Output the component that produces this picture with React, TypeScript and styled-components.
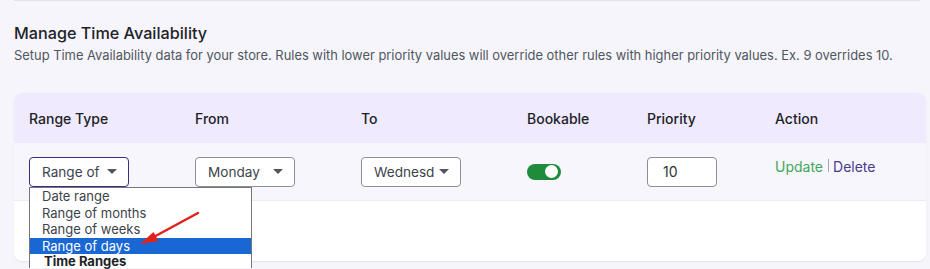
import React from "react";
import styled, { createGlobalStyle } from "styled-components";

const GlobalStyle = createGlobalStyle`
  html, body { margin: 0; padding: 0; height: 100%; }
  body {
    background: #f6f5fb;
    font-family: Inter, "Noto Sans", sans-serif;
    color: #1d2327;
    overflow: hidden;
  }
  #root { height: 100%; }
`;

const Page = styled.div`
  box-sizing: border-box;
  min-height: 100%;
  padding: 0 4px 0 14px;
`;

const TopRule = styled.div`
  height: 1px;
  background: #e2e1e8;
  margin-right: 6px;
`;

const Title = styled.h2`
  margin: 20px 0 0;
  font-size: 16.2px;
  line-height: 24px;
  font-weight: 500;
  color: #1d2327;
`;

const Subtitle = styled.p`
  margin: 1px 0 0;
  font-size: 12.9px;
  line-height: 20px;
  color: #50575e;
`;

const Card = styled.div`
  position: relative;
  margin-top: 27px;
  border-radius: 8px;
  background: #ffffff;
  box-shadow: 0 1px 0 #e6e5ec, 0 1px 3px rgba(0, 0, 0, 0.04);
  height: 168px;
`;

const Grid = styled.div<{ $bg: string; $h: number }>`
  display: grid;
  grid-template-columns: 166px 166px 166px 120px 128px 1fr;
  align-items: center;
  padding-left: 15px;
  height: ${(p) => p.$h}px;
  background: ${(p) => p.$bg};
`;

const HeaderRow = styled(Grid)`
  border-radius: 8px 8px 0 0;
`;

const BodyRow = styled(Grid)`
  border-bottom: 1px solid #ecebf1;
  box-sizing: border-box;
`;

const HeadCell = styled.div`
  font-size: 14px;
  font-weight: 500;
  color: #1d2327;
`;

const SelectBox = styled.div<{ $w: number; $focus?: boolean }>`
  box-sizing: border-box;
  width: ${(p) => p.$w}px;
  height: 30px;
  border: 1px solid ${(p) => (p.$focus ? "#3b2a86" : "#8c8f94")};
  border-radius: 4px;
  background: #ffffff;
  display: flex;
  align-items: center;
  justify-content: space-between;
  padding: 0 11px 0 12px;
  font-size: 13.6px;
  color: #3c434a;
`;

const Caret = styled.span`
  flex: none;
  margin-left: 4px;
  width: 0;
  height: 0;
  border-left: 5px solid transparent;
  border-right: 5px solid transparent;
  border-top: 5px solid #50575e;
`;

const Toggle = styled.div<{ $on: boolean }>`
  position: relative;
  width: 34px;
  height: 16px;
  border-radius: 8px;
  background: ${(p) => (p.$on ? "#1e8c3a" : "#bbb")};
`;

const Knob = styled.span`
  position: absolute;
  top: 1.5px;
  right: 3px;
  width: 13px;
  height: 13px;
  border-radius: 50%;
  background: #ffffff;
`;

const NumberInput = styled.div`
  box-sizing: border-box;
  width: 70px;
  height: 30px;
  border: 1px solid #8c8f94;
  border-radius: 4px;
  background: #ffffff;
  display: flex;
  align-items: center;
  padding-left: 15px;
  font-size: 14px;
  color: #2c3338;
`;

const Actions = styled.div`
  align-self: start;
  margin-top: 15px;
  display: flex;
  align-items: flex-start;
  font-size: 14px;
  line-height: 17px;
`;

const ActionLink = styled.span<{ $color: string }>`
  color: ${(p) => p.$color};
  cursor: pointer;
`;

const Sep = styled.span`
  width: 1px;
  height: 13px;
  margin: 1px 4px 0 5px;
  background: #a7aaad;
`;

const Listbox = styled.div`
  position: absolute;
  left: 15px;
  top: 94px;
  width: 223px;
  box-sizing: border-box;
  border: 1px solid #767676;
  border-bottom: none;
  background: #ffffff;
  z-index: 2;
`;

const Option = styled.div<{ $active?: boolean }>`
  height: 16.5px;
  line-height: 16.5px;
  padding-left: 12px;
  font-size: 13px;
  background: ${(p) => (p.$active ? "#1967d2" : "transparent")};
  color: ${(p) => (p.$active ? "#ffffff" : "#3c434a")};
`;

const GroupLabel = styled.div`
  height: 14px;
  line-height: 14px;
  padding-left: 14px;
  font-size: 13px;
  font-weight: 700;
  color: #1d2327;
`;

const ArrowSvg = styled.svg`
  position: absolute;
  left: 120px;
  top: 112px;
  z-index: 3;
  pointer-events: none;
  overflow: visible;
`;

export default function App() {
  const options = ["Date range", "Range of months", "Range of weeks", "Range of days"];
  return (
    <>
      <GlobalStyle />
      <Page>
        <TopRule />
        <Title>Manage Time Availability</Title>
        <Subtitle>
          Setup Time Availability data for your store. Rules with lower priority values will override other rules with
          higher priority values. Ex. 9 overrides 10.
        </Subtitle>
        <Card>
          <HeaderRow $bg="#efeafd" $h={50}>
            <HeadCell>Range Type</HeadCell>
            <HeadCell>From</HeadCell>
            <HeadCell>To</HeadCell>
            <HeadCell>Bookable</HeadCell>
            <HeadCell>Priority</HeadCell>
            <HeadCell>Action</HeadCell>
          </HeaderRow>
          <BodyRow $bg="#f7f6fc" $h={58}>
            <SelectBox $w={100} $focus>
              Range of <Caret />
            </SelectBox>
            <SelectBox $w={100}>
              Monday <Caret />
            </SelectBox>
            <SelectBox $w={100}>
              Wednesd <Caret />
            </SelectBox>
            <Toggle $on>
              <Knob />
            </Toggle>
            <NumberInput>10</NumberInput>
            <Actions>
              <ActionLink $color="#3fa65a">Update</ActionLink>
              <Sep />
              <ActionLink $color="#4a3a8c">Delete</ActionLink>
            </Actions>
          </BodyRow>
          <Listbox>
            {options.map((o, i) => (
              <Option key={o} $active={i === 3}>
                {o}
              </Option>
            ))}
            <GroupLabel>Time Ranges</GroupLabel>
          </Listbox>
          <ArrowSvg width="70" height="42" viewBox="120 112 70 42">
            <line x1="184" y1="120" x2="136" y2="146" stroke="#e3211c" strokeWidth="2.5" strokeLinecap="round" />
            <polygon points="126,151 139.5,139 144.5,148" fill="#e3211c" />
          </ArrowSvg>
        </Card>
      </Page>
    </>
  );
}
